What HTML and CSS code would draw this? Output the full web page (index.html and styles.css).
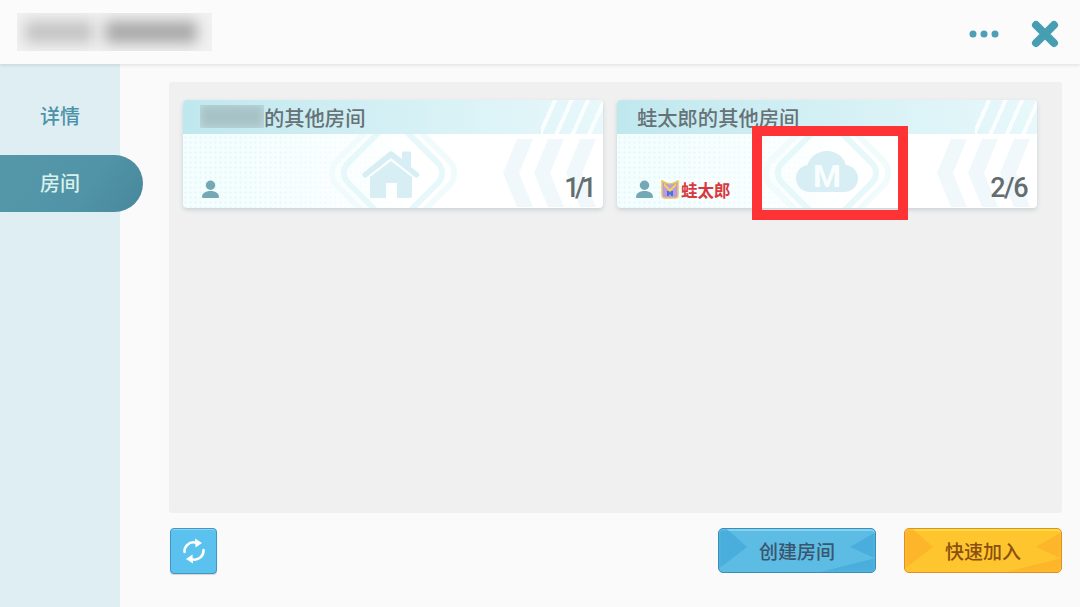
FILE: index.html
```html
<!DOCTYPE html>
<html lang="zh-CN">

<head>
  <meta charset="UTF-8">
  <title>房间</title>
  <link rel="stylesheet" href="styles.css">
</head>

<body>
  <svg class="defs" width="0" height="0">
    <symbol id="card-art" viewBox="0 0 420 108">
      <g fill="none" transform="rotate(45 210 73)">
        <rect x="161.500" y="24.500" width="97" height="97" rx="18" stroke="#f2fbfc" stroke-width="6" />
        <rect x="171.250" y="34.250" width="77.500" height="77.500" rx="14" stroke="#e7f8fa" stroke-width="6" />
      </g>
      <g fill="#f1f8fb">
        <polygon points="334,39 350,39 336,73 350,107 334,107 320,73" />
        <polygon points="365,39 381,39 367,73 381,107 365,107 351,73" />
        <polygon points="397,39 413,39 399,73 413,107 397,107 383,73" />
      </g>
    </symbol>
    <symbol id="person" viewBox="0 0 18 20">
      <circle cx="9" cy="5.500" r="5" />
      <path d="M1 19c-.6 0-1-.4-1-1 0-4 3.500-6.500 9-6.500s9 2.500 9 6.500c0 .6-.4 1-1 1z" />
    </symbol>
  </svg>

  <header class="topbar">
    <div class="title-blur">
      <span class="blur-a"></span>
      <span class="blur-b"></span>
    </div>
    <div class="top-actions">
      <svg class="dots" width="30" height="8" viewBox="0 0 30 8">
        <circle cx="4" cy="4" r="3.500" />
        <circle cx="15" cy="4" r="3.500" />
        <circle cx="26" cy="4" r="3.500" />
      </svg>
      <svg class="close" width="28" height="28" viewBox="0 0 28 28">
        <path d="M5 5 23 23M23 5 5 23" />
      </svg>
    </div>
  </header>

  <div class="layout">
    <nav class="sidebar">
      <div class="tab">详情</div>
      <div class="tab active">房间</div>
    </nav>

    <main class="content">
      <section class="panel">
        <article class="card">
          <svg class="card-art"><use href="#card-art" /></svg>
          <div class="card-title"><span class="name-blur"><i></i></span>的其他房间</div>
          <svg class="card-icon" width="58" height="47" viewBox="0 0 58 47">
            <path class="fill-icon" d="M1 22 27 1c1-1 3-1 4 0l9 7V2c0-1 .5-1.500 1.500-1.500h6c1 0 1.500 .5 1.500 1.500v14l7.500 6c1 1 1 2 .3 3l-.8 1c-1 1-2 1-3 .3L29 7 4.500 26.300c-1 .7-2 .7-3-.3l-.8-1c-.7-1-.7-2 .3-3z" />
            <path class="fill-icon" d="M8 26 29 10l21 16v19c0 1-.7 2-2 2H35V32H24v15H10c-1.300 0-2-1-2-2z" />
          </svg>
          <div class="card-bottom">
            <svg class="person"><use href="#person" /></svg>
            <span class="count tight">1/1</span>
          </div>
        </article>

        <article class="card">
          <svg class="card-art"><use href="#card-art" /></svg>
          <div class="card-title">蛙太郎的其他房间</div>
          <svg class="card-icon" width="62" height="46" viewBox="0 0 62 46">
            <path class="fill-icon" d="M14 41C6 41 0 35 0 27.500 0 20 5 15 11.500 14 14 5.500 22 0 31 0c9 0 16.500 5.500 19 14 6.500 1 12 6 12 13.500C62 35 56 41 48 41z" />
            <text class="cloud-m" x="31" y="36">M</text>
          </svg>
          <div class="card-bottom">
            <svg class="person"><use href="#person" /></svg>
            <svg class="badge" width="18" height="19" viewBox="0 0 18 19">
              <path d="M1 1 5 3c2 1 6 1 8 0l4-2v14c0 2-1 3-3 3H4c-2 0-3-1-3-3z" fill="#b79be8" stroke="#ecc65a" stroke-width="1.500" />
              <path d="M3 3 9 9l6-6v3L9 12 3 6z" fill="#f7d24a" />
              <path d="M6 11h2l1 2 1-2h2v5h-2v-2l-1 1-1-1v2H6z" fill="#4a6fd8" />
            </svg>
            <span class="owner">蛙太郎</span>
            <span class="count">2/6</span>
          </div>
          <div class="highlight"></div>
        </article>
      </section>

      <footer class="actions">
        <button class="btn-refresh" type="button">
          <svg width="26" height="26" viewBox="0 0 26 26">
            <path d="M3.500 14C3 8.500 8 3.500 14 4.500" />
            <path class="arrow" d="M14 0.500 21 5 14.500 9.500z" />
            <path d="M22.500 12C23 17.500 18 22.500 12 21.500" />
            <path class="arrow" d="M12 25.500 5 21 11.500 16.500z" />
          </svg>
        </button>
        <div class="action-right">
          <button class="btn btn-blue" type="button">创建房间</button>
          <button class="btn btn-yellow" type="button">快速加入</button>
        </div>
      </footer>
    </main>
  </div>
</body>

</html>
```

FILE: styles.css
```css
/* page */
html,
body {
  margin: 0;
  padding: 0;
}

body {
  width: 1080px;
  height: 607px;
  overflow: hidden;
  display: flex;
  flex-direction: column;
  background-color: #fafafa;
  font-family: "Noto Sans CJK SC", "Noto Sans", sans-serif;
  font-weight: 500;
}

.defs {
  display: block;
  height: 0;
}

/* top bar */
.topbar {
  height: 64px;
  flex-shrink: 0;
  display: flex;
  align-items: center;
  justify-content: space-between;
  padding: 0 21px 0 17px;
  background-color: #fbfbfb;
  box-shadow: 0 1px 4px rgba(0, 0, 0, 0.12);
  position: relative;
  z-index: 2;
}

.title-blur {
  width: 195px;
  height: 38px;
  margin-top: -1px;
  overflow: hidden;
  display: flex;
  align-items: center;
  gap: 12px;
  padding-left: 8px;
  box-sizing: border-box;
  background-color: #f1f1f1;
}

.blur-a,
.blur-b {
  display: block;
  flex-shrink: 0;
  height: 22px;
  filter: blur(7px);
}

.blur-a {
  width: 68px;
  background-color: #c4c4c4;
}

.blur-b {
  width: 92px;
  background-color: #a9a9a9;
}

.top-actions {
  display: flex;
  align-items: center;
  gap: 32px;
  margin-top: 3px;
}

.dots {
  fill: #4d9fb6;
}

.close {
  fill: none;
  stroke: #479eb3;
  stroke-width: 8;
  stroke-linecap: round;
}

/* sidebar and content */
.layout {
  flex: 1;
  display: flex;
  min-height: 0;
}

.sidebar {
  width: 120px;
  flex-shrink: 0;
  padding-top: 32px;
  background-color: #dfeef3;
}

.tab {
  height: 40px;
  line-height: 40px;
  width: 120px;
  text-align: center;
  font-size: 20px;
  color: #4d93a8;
  margin-bottom: 19px;
}

.tab.active {
  width: 143px;
  height: 57px;
  line-height: 55px;
  padding-right: 23px;
  box-sizing: border-box;
  border-radius: 0 29px 29px 0;
  color: #d8f1ec;
  background: linear-gradient(125deg, #5598aa 0%, #5194a7 60%, #48879b 100%);
}

.content {
  flex: 1;
  display: flex;
  flex-direction: column;
  padding: 18px 18px 0 49px;
}

.panel {
  height: 431px;
  box-sizing: border-box;
  display: flex;
  align-items: flex-start;
  gap: 14px;
  padding: 18px 14px;
  border-radius: 3px;
  background-color: #f0f0f0;
}

/* room cards */
.card {
  width: 420px;
  height: 108px;
  position: relative;
  overflow: hidden;
  border-radius: 4px;
  color: #667276;
  background-color: #ffffff;
  background-image:
    linear-gradient(90deg, rgba(255, 255, 255, 0) 15%, #ffffff 55%),
    radial-gradient(circle, #e8f9fb 1.1px, #f5fefe 1.2px);
  background-size: 100% 100%, 5px 5px;
  box-shadow: 0 2px 4px rgba(90, 120, 130, 0.25);
}

.card-art {
  position: absolute;
  left: 0;
  top: 0;
  width: 420px;
  height: 108px;
}

.card-title {
  position: relative;
  height: 34px;
  line-height: 34px;
  padding-left: 20px;
  display: flex;
  font-size: 20.300px;
  background-image:
    repeating-linear-gradient(114deg, transparent 0 11px, rgba(255, 255, 255, 0.85) 11px 15px),
    linear-gradient(90deg, #bfe8ee 0%, #e8f8fb 100%);
  background-size: 62px 100%, 100% 100%;
  background-position: right top, left top;
  background-repeat: no-repeat;
}

.name-blur {
  width: 64px;
  height: 23px;
  margin: 5px 0 0 -3px;
  overflow: hidden;
  background-color: #c0dde2;
}

.name-blur i {
  display: block;
  width: 64px;
  height: 23px;
  filter: blur(5px);
  background-color: #a6c2c6;
}

.card-icon {
  position: absolute;
  left: 179px;
  top: 51px;
}

.fill-icon {
  fill: #d6eef4;
}

.cloud-m {
  fill: #f8fdfe;
  font-family: "Roboto", sans-serif;
  font-size: 32px;
  font-weight: 700;
  text-anchor: middle;
}

.card-bottom {
  position: absolute;
  left: 19px;
  right: 9px;
  bottom: 0;
  height: 42px;
  display: flex;
  align-items: center;
  padding-top: 5px;
  box-sizing: border-box;
}

.person {
  width: 17px;
  height: 19px;
  fill: #74a8b5;
  flex-shrink: 0;
}

.badge {
  margin-left: 8px;
  flex-shrink: 0;
}

.owner {
  margin-left: 2px;
  font-size: 16.500px;
  font-weight: 700;
  color: #d8393f;
  white-space: nowrap;
}

.count {
  margin-left: auto;
  margin-top: -3px;
  margin-right: 1px;
  font-family: "Roboto", sans-serif;
  font-size: 27px;
  font-weight: 500;
  letter-spacing: -1.500px;
  color: #626d70;
}

.count.tight {
  letter-spacing: -4.500px;
  margin-right: 2px;
}

.highlight {
  display: none;
}

/* the red box sits over the second card */
.card:last-child {
  overflow: visible;
}

.card:last-child .highlight {
  display: block;
  position: absolute;
  left: 135px;
  top: 26px;
  width: 156px;
  height: 94px;
  box-sizing: border-box;
  border: 10px solid #fe3335;
}

.card:last-child .card-title {
  border-radius: 4px 4px 0 0;
}

/* bottom buttons */
.actions {
  display: flex;
  align-items: flex-start;
  justify-content: space-between;
  padding: 15px 0 0 1px;
}

.action-right {
  display: flex;
  gap: 28px;
}

button {
  font-family: inherit;
  font-weight: 500;
  cursor: pointer;
}

.btn-refresh {
  width: 47px;
  height: 46px;
  padding: 0;
  display: flex;
  align-items: center;
  justify-content: center;
  border: 1px solid #3f97c4;
  border-radius: 4px;
  background-color: #5bc2f0;
  box-shadow: inset 0 1px 0 #8bd6f6, 0 1px 1px rgba(0, 0, 0, 0.15);
}

.btn-refresh svg {
  fill: none;
  stroke: #ffffff;
  stroke-width: 2.500;
  stroke-linecap: round;
}

.btn-refresh .arrow {
  fill: #ffffff;
  stroke: none;
}

.btn {
  width: 158px;
  height: 45px;
  padding: 0;
  font-size: 19px;
  border-radius: 5px;
  position: relative;
  isolation: isolate;
  overflow: hidden;
}

/* corner wedges on the buttons */
.btn::before,
.btn::after {
  content: "";
  position: absolute;
  inset: 0;
  z-index: -1;
  filter: blur(1.500px);
}

.btn::before {
  clip-path: polygon(0 0, 5% 0, 18% 42%, 0 92%);
}

.btn::after {
  clip-path: polygon(84% 42%, 100% 8%, 100% 100%, 65% 100%, 100% 68%);
}

.btn-blue {
  color: #3a566e;
  border: 1px solid #3a8db5;
  background-color: #5cbce4;
  box-shadow: inset 0 2px 0 #83d2f0;
}

.btn-blue::before,
.btn-blue::after {
  background-color: #4aaedc;
}

.btn-yellow {
  color: #8a5010;
  border: 1px solid #e08f28;
  background-color: #fec52e;
  box-shadow: inset 0 2px 0 #fddc40;
}

.btn-yellow::before,
.btn-yellow::after {
  background-color: #fdb62a;
}
```
